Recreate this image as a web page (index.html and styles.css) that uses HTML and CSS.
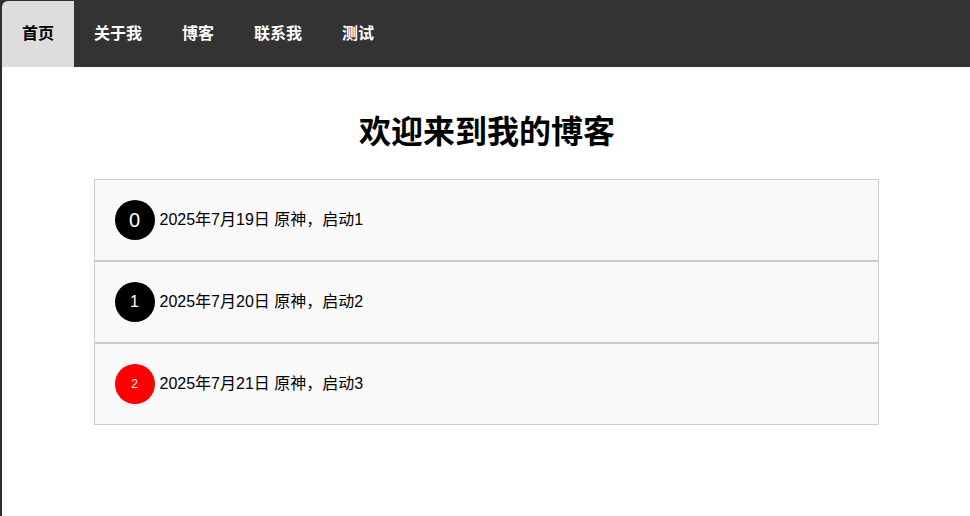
FILE: index.html
```html
<!DOCTYPE html>
<html lang="zh-CN">
<head>
<meta charset="utf-8">
<title>首页</title>
<link rel="stylesheet" href="styles.css">
</head>
<body>
<nav class="nav">
  <a class="nav-item active" href="#">首页</a>
  <a class="nav-item" href="#">关于我</a>
  <a class="nav-item" href="#">博客</a>
  <a class="nav-item" href="#">联系我</a>
  <a class="nav-item" href="#">测试</a>
</nav>
<main class="main">
  <h1 class="title">欢迎来到我的博客</h1>
  <ul class="posts">
    <li class="post"><span class="badge badge-0">0</span><span class="post-text">2025年7月19日 原神，启动1</span></li>
    <li class="post"><span class="badge badge-1">1</span><span class="post-text">2025年7月20日 原神，启动2</span></li>
    <li class="post"><span class="badge badge-2">2</span><span class="post-text">2025年7月21日 原神，启动3</span></li>
  </ul>
</main>
</body>
</html>
```

FILE: styles.css
```css
html, body {
  margin: 0;
  padding: 0;
}
body {
  background: #fff;
  border-left: 2px solid #2e2e2e;
  min-height: 516px;
  box-sizing: border-box;
  font-family: "Liberation Sans", "Noto Sans CJK SC", sans-serif;
  color: #000;
}
.nav {
  display: flex;
  background: #333;
  padding-top: 1px;
  height: 67px;
  box-sizing: border-box;
}
.nav-item {
  display: block;
  padding: 0 20px;
  line-height: 66px;
  height: 66px;
  color: #fff;
  font-weight: bold;
  font-size: 16px;
  text-decoration: none;
}
.nav-item.active {
  background: #ddd;
  color: #000;
  border-top-left-radius: 6px;
}
.main {
  padding-top: 42px;
}
.title {
  margin: 0 0 0 2px;
  font-size: 32px;
  line-height: 46px;
  text-align: center;
  font-weight: bold;
}
.posts {
  list-style: none;
  margin: 24px auto 0;
  padding: 0;
  width: 785px;
}
.post {
  display: flex;
  align-items: center;
  gap: 5px;
  padding: 20px;
  border: 1px solid #ccc;
  background: #f9f9f9;
  height: 40px;
}
.badge {
  width: 40px;
  height: 40px;
  border-radius: 50%;
  background: #000;
  color: #fff;
  display: flex;
  align-items: center;
  justify-content: center;
  flex: none;
}
.badge-0 { font-size: 20px; }
.badge-1 { font-size: 16px; }
.badge-2 { font-size: 12px; background: #f00; }
.post-text {
  font-size: 16px;
  line-height: 20px;
}
```
